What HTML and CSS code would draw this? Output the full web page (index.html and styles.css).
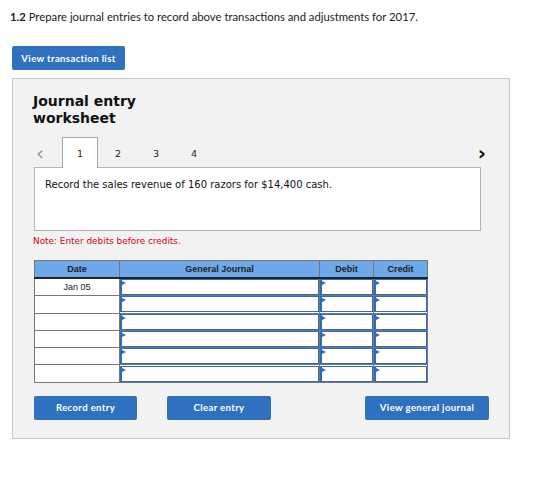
FILE: index.html
```html
<!DOCTYPE html>
<html>
<head>
<meta charset="utf-8">
<link rel="stylesheet" href="styles.css">
</head>
<body>
<p class="title"><b>1.2</b> Prepare journal entries to record above transactions and adjustments for 2017.</p>
<button class="btn btn-list">View transaction list</button>
<div class="panel">
  <h2 class="heading">Journal entry<br>worksheet</h2>
  <div class="tabs">
    <span class="arrow prev">&lsaquo;</span>
    <span class="tab active">1</span>
    <span class="tab">2</span>
    <span class="tab">3</span>
    <span class="tab">4</span>
    <span class="spacer"></span>
    <span class="arrow next">&rsaquo;</span>
  </div>
  <div class="desc">Record the sales revenue of 160 razors for $14,400 cash.</div>
  <p class="note">Note: Enter debits before credits.</p>
  <table class="journal">
    <colgroup><col class="c-date"><col class="c-gj"><col class="c-amt"><col class="c-amt"></colgroup>
    <thead>
      <tr><th>Date</th><th>General Journal</th><th>Debit</th><th>Credit</th></tr>
    </thead>
    <tbody>
      <tr><td class="date">Jan 05</td><td class="in"><span class="box"></span></td><td class="in"><span class="box"></span></td><td class="in"><span class="box"></span></td></tr>
      <tr><td class="date"></td><td class="in"><span class="box"></span></td><td class="in"><span class="box"></span></td><td class="in"><span class="box"></span></td></tr>
      <tr><td class="date"></td><td class="in"><span class="box"></span></td><td class="in"><span class="box"></span></td><td class="in"><span class="box"></span></td></tr>
      <tr><td class="date"></td><td class="in"><span class="box"></span></td><td class="in"><span class="box"></span></td><td class="in"><span class="box"></span></td></tr>
      <tr><td class="date"></td><td class="in"><span class="box"></span></td><td class="in"><span class="box"></span></td><td class="in"><span class="box"></span></td></tr>
      <tr><td class="date"></td><td class="in"><span class="box"></span></td><td class="in"><span class="box"></span></td><td class="in"><span class="box"></span></td></tr>
    </tbody>
  </table>
  <div class="actions">
    <button class="btn btn-record">Record entry</button>
    <button class="btn btn-clear">Clear entry</button>
    <span class="spacer"></span>
    <button class="btn btn-view">View general journal</button>
  </div>
</div>
</body>
</html>
```

FILE: styles.css
```css
html, body { margin: 0; padding: 0; background: #fff; }
body { padding: 10px 0 0 12px; font-family: Lato, "Open Sans", sans-serif; color: #222; width: 539px; }
.title { margin: 0 0 0 -2px; font-size: 11.3px; line-height: 14px; color: #222; }
.title b { font-weight: 700; }
.btn {
  display: inline-flex; align-items: center; justify-content: center;
  background: #2f71bf; color: #fff; border: none; border-radius: 2px;
  font-family: Lato, sans-serif; font-weight: 700; font-size: 9.6px; letter-spacing: 0.35px;
  height: 24px; padding: 0; cursor: pointer;
}
.btn-list { margin-top: 22px; width: 113px; }
.panel {
  margin-top: 8px; width: 455px; background: #f2f2f2; border: 1px solid #c8c8c8;
  padding: 14px 20px 18px 21px;
}
.heading {
  margin: 0 0 0 -1px; font-family: "DejaVu Sans", Verdana, sans-serif; font-weight: 700;
  font-size: 14px; line-height: 17px; color: #111;
}
.tabs { display: flex; align-items: flex-end; height: 30px; margin-top: 10px; font-family: "DejaVu Sans", Verdana, sans-serif; font-size: 9.5px; color: #222; }
.arrow { align-self: center; font-size: 20px; line-height: 20px; margin-top: 2px; }
.prev { color: #999; width: 28px; padding-left: 2px; box-sizing: border-box; }
.next { color: #111; margin-right: 3px; font-weight: 700; }
.tab { width: 36px; height: 29px; margin-right: 2px; display: flex; align-items: center; justify-content: center; box-sizing: border-box; border: 1px solid transparent; border-bottom: none; }
.tab.active { background: #fff; border-color: #aaa; height: 31px; margin-bottom: -1px; position: relative; z-index: 1; }
.spacer { flex: 1; }
.desc {
  width: 447px; box-sizing: border-box; height: 64px; background: #fff; border: 1px solid #b4b4b4;
  padding: 10px 10px; font-family: "DejaVu Sans", Verdana, sans-serif; font-size: 10px; line-height: 14px; color: #111;
}
.note { margin: 4px 0 0 -1px; font-family: "DejaVu Sans", Verdana, sans-serif; font-size: 8.9px; line-height: 12px; color: #d0021b; }
.journal { margin-top: 13px; border-collapse: collapse; width: 393px; table-layout: fixed; font-family: "Liberation Sans", Arial, sans-serif; font-size: 9px; }
.c-date { width: 85px; }
.c-gj { width: 200px; }
.c-amt { width: 54px; }
.journal th { background: #6fa8e8; height: 16px; padding: 0; border: 1px solid #777; border-bottom: 2px solid #222; border-left-color: #222; font-weight: 700; color: #222; }
.journal th:first-child { border-left-color: #777; }
.journal td { height: 16.3px; padding: 0; border: 1px solid #777; background: #fff; }
.journal td.date { text-align: center; color: #222; }
.journal td.in { border-left: 1px solid #222; position: relative; }
.journal td.in .box { display: block; height: 16px; box-sizing: border-box; border: 1px solid #2e6cba; border-left-width: 2px; position: relative; }
.journal td.in .box::before { content: ""; position: absolute; left: 0; top: 1px; border-left: 4px solid #2e6cba; border-top: 2.5px solid transparent; border-bottom: 2.5px solid transparent; }
.actions { display: flex; margin-top: 13px; }
.btn-record { width: 103px; }
.btn-clear { width: 104px; margin-left: 30px; }
.btn-view { width: 124px; }
```
